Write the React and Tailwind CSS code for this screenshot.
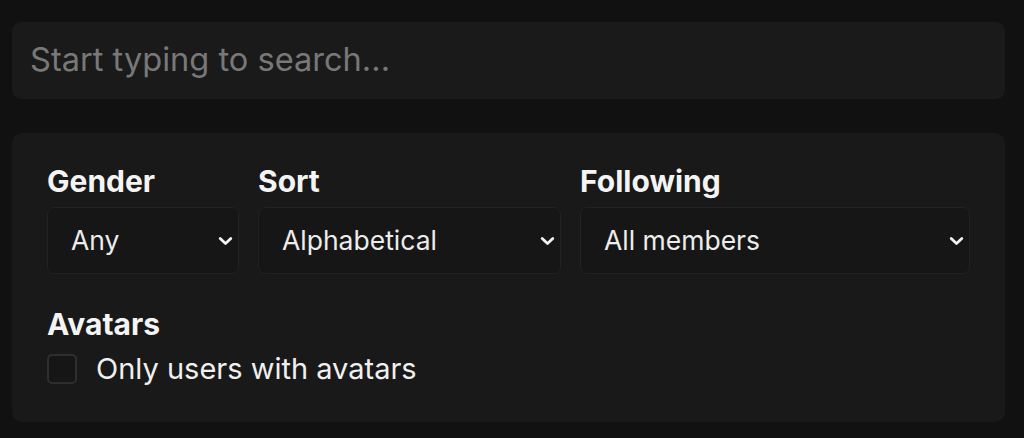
import React from "react";

function Chevron() {
  return (
    <svg width="15" height="10" viewBox="0 0 15 10" fill="none" className="shrink-0">
      <path d="M2.2 2.5l5.3 5 5.3-5" stroke="#f2f2f2" strokeWidth="2.8" strokeLinecap="round" strokeLinejoin="round" />
    </svg>
  );
}

function Field({ label, value, width }) {
  return (
    <div className="flex flex-col" style={{ width }}>
      <div className="text-[30px] font-bold leading-[32px] text-[#f4f4f4]">{label}</div>
      <div className="mt-[10px] h-[67px] rounded-[7px] border border-[#222222] bg-[#161616] flex items-center justify-between pl-[23px] pr-[5px]">
        <span className="text-[26.5px] text-[#ececec]">{value}</span>
        <Chevron />
      </div>
    </div>
  );
}

export default function App() {
  return (
    <div
      className="min-h-screen w-full bg-[#111111] pt-[22px] pl-3"
      style={{ fontFamily: "Inter, 'Noto Sans', sans-serif" }}
    >
      <div className="w-[993px] h-[77px] rounded-[9px] bg-[#1a1a1a] flex items-center pl-[18px] pb-[3px] text-[32.6px] text-[#787878]">
        Start typing to search...
      </div>
      <div className="mt-[34px] w-[993px] h-[289px] rounded-[10px] bg-[#191919] px-[35px] pt-[32px]">
        <div className="flex gap-[19px]">
          <Field label="Gender" value="Any" width={192} />
          <Field label="Sort" value="Alphabetical" width={303} />
          <Field label="Following" value="All members" width={390} />
        </div>
        <div className="mt-[34px] text-[30px] font-bold leading-[32px] text-[#f4f4f4]">Avatars</div>
        <label className="mt-[14px] flex items-center gap-[19px]">
          <span className="w-[30px] h-[30px] rounded-[5px] border-2 border-[#2e2e2e] bg-[#161616]" />
          <span className="text-[29px] leading-[30px] text-[#f0f0f0]">Only users with avatars</span>
        </label>
      </div>
    </div>
  );
}
